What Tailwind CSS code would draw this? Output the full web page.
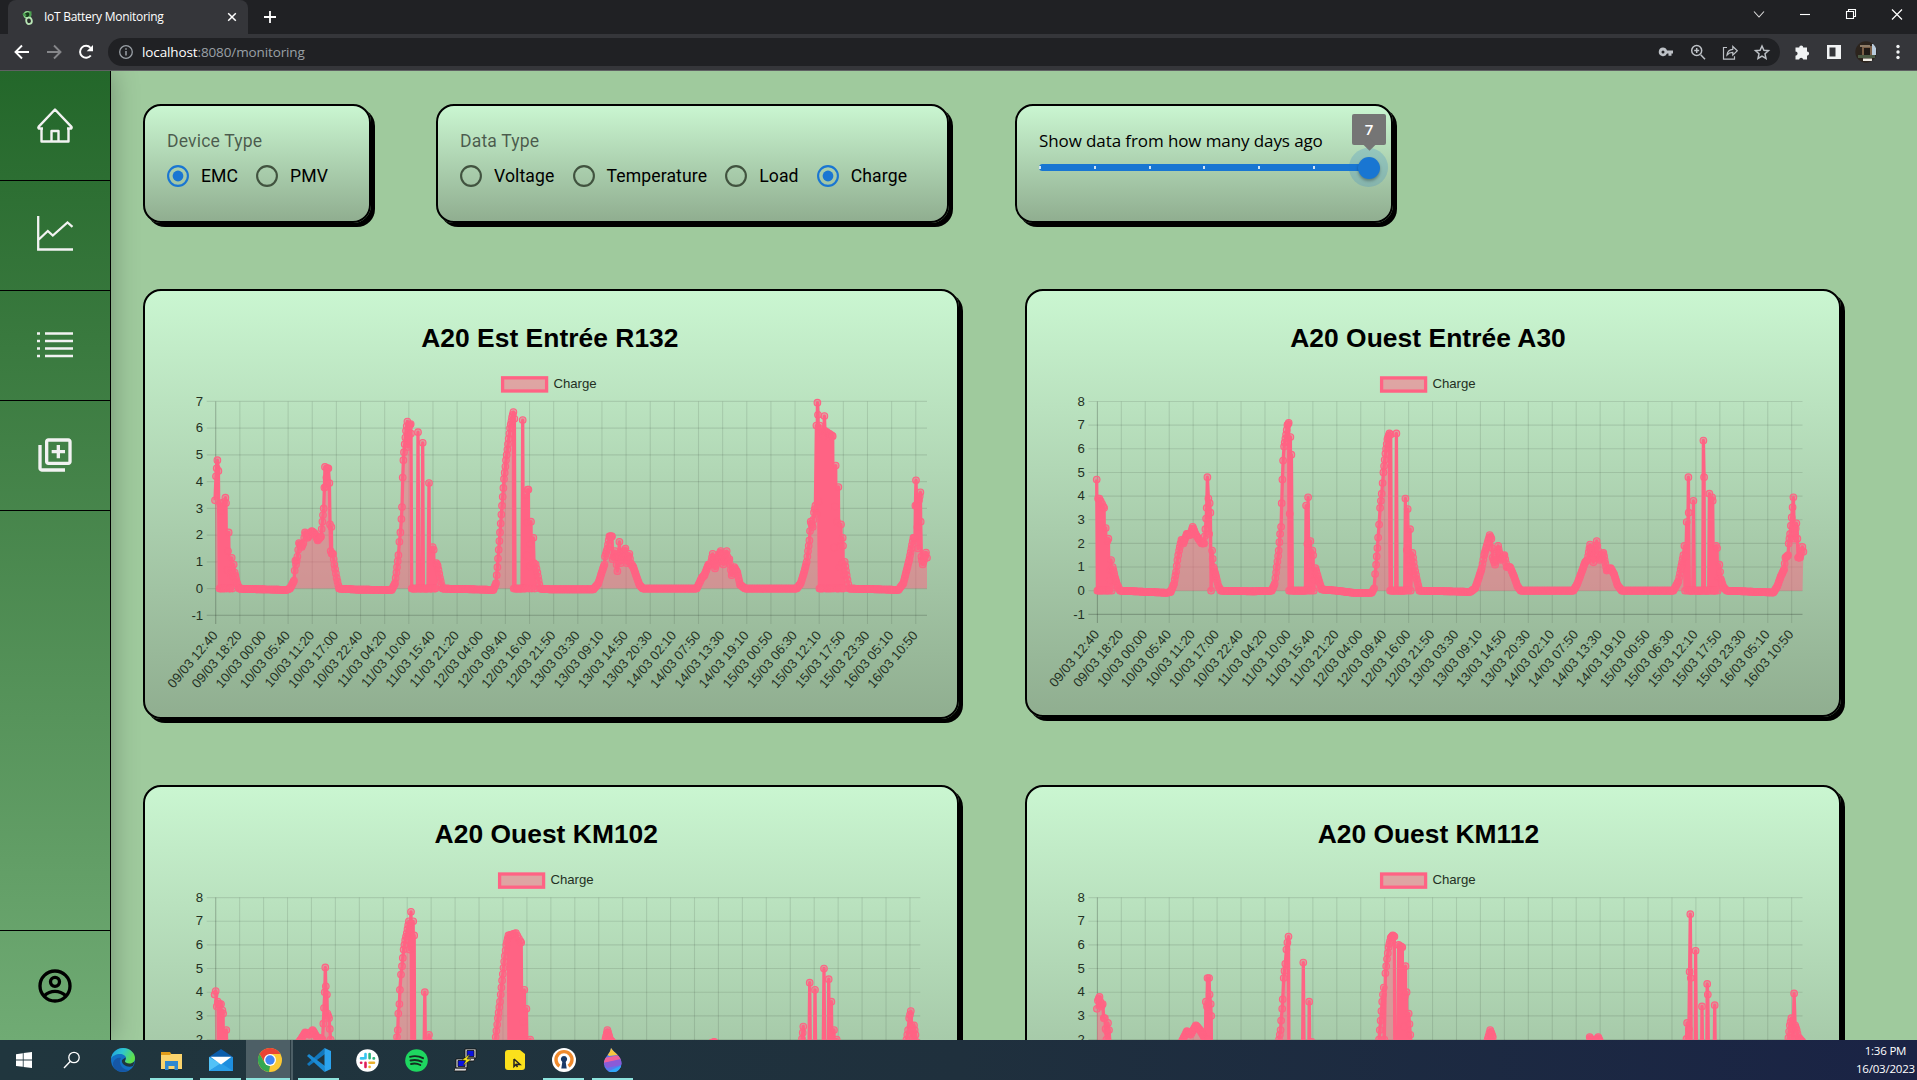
<!DOCTYPE html>
<html lang="en">
<head>
<meta charset="utf-8">
<title>IoT Battery Monitoring</title>
<script src="https://cdn.jsdelivr.net/npm/@tailwindcss/browser@4"></script>
</head>
<body class="flex h-screen w-screen flex-col overflow-hidden bg-[#9fca9d] font-['Roboto',sans-serif] text-black">

<!-- Tab strip -->
<header class="flex h-[34px] shrink-0 items-stretch justify-between bg-[#202124] text-white">
  <div class="flex items-stretch pl-2">
    <div class="flex w-[240px] items-center rounded-t-lg bg-[#35363a] pl-3 pr-[9px]">
      <svg class="mr-[8px] mt-px size-4 shrink-0" viewBox="0 0 16 16"><g transform="rotate(-12 8 8)"><ellipse cx="8" cy="4.600" rx="3.400" ry="3" fill="#183b1c" stroke="#8fd58f" stroke-width="1.300"/><path d="M4 2.500l2.500 3M12 2l-2.500 7" stroke="#4aa04f" stroke-width="2"/><ellipse cx="8.400" cy="11" rx="2.800" ry="3.200" fill="#2a2d2b" stroke="#b9e6b6" stroke-width="1.800"/></g></svg>
      <span class="grow whitespace-nowrap font-['Open_Sans',sans-serif] text-[12px] tracking-[-0.28px]">IoT Battery Monitoring</span>
      <svg class="size-[14px]" viewBox="0 0 14 14"><path d="M3.200 3.200l7.600 7.600M10.800 3.200l-7.600 7.600" stroke="#fff" stroke-width="1.500"/></svg>
    </div>
    <svg class="ml-[15px] mt-[10px] size-[14px]" viewBox="0 0 14 14"><path d="M7 1v12M1 7h12" stroke="#fff" stroke-width="1.800"/></svg>
  </div>
  <div class="flex h-[28px] items-center">
    <svg class="w-[46px]" height="14" viewBox="0 0 46 14"><path d="M18 4.500l5 5.500 5-5.500" fill="none" stroke="#ddd" stroke-width="1.100"/></svg>
    <svg class="w-[46px]" height="14" viewBox="0 0 46 14"><path d="M18 7.500h10" stroke="#fff" stroke-width="1.100"/></svg>
    <svg class="w-[46px]" height="14" viewBox="0 0 46 14"><path d="M18.500 4.500h7v7h-7zM20.500 4.500v-2h7v7h-2" fill="none" stroke="#fff" stroke-width="1.100"/></svg>
    <svg class="w-[43px]" height="14" viewBox="0 0 43 14"><path d="M18 2.500l10 10M28 2.500l-10 10" stroke="#fff" stroke-width="1.200"/></svg>
  </div>
</header>

<!-- Address bar -->
<div class="flex h-[37px] shrink-0 items-center border-b border-[#5f6063] bg-[#35363a] pl-[6px] pr-[3px]">
  <svg class="w-8" height="20" viewBox="0 0 32 20"><path d="M23 10H9.800M16 3.500L9.500 10l6.500 6.500" fill="none" stroke="#fff" stroke-width="1.900"/></svg>
  <svg class="w-8" height="20" viewBox="0 0 32 20"><path d="M9 10h13.200M16 3.500l6.500 6.500-6.500 6.500" fill="none" stroke="#86878a" stroke-width="1.900"/></svg>
  <svg class="w-8" height="20" viewBox="0 0 32 20"><path d="M20.800 13.500A6 6 0 1 1 20.500 5.800" fill="none" stroke="#fff" stroke-width="2"/><path d="M23 3v6.300h-6.300z" fill="#fff"/></svg>
  <div class="ml-[6px] flex h-7 grow items-center rounded-full bg-[#202124] pl-[10px] pr-[2px]">
    <svg class="mr-[8px] size-4" viewBox="0 0 16 16"><circle cx="8" cy="8" r="6.300" fill="none" stroke="#9aa0a6" stroke-width="1.300"/><path d="M8 7v4.500M8 4.300v1.500" stroke="#9aa0a6" stroke-width="1.500"/></svg>
    <span class="grow whitespace-nowrap font-['Open_Sans',sans-serif] text-[13.500px] tracking-[-0.12px] text-white">localhost<span class="text-[#9aa0a6]">:8080/monitoring</span></span>
    <svg class="w-8" height="20" viewBox="0 0 32 20"><path fill="#bdc1c6" fill-rule="evenodd" d="M13 5.500a4.300 4.300 0 1 0 4 6h1.500v2.300h3v-2.300h1.500v-3h-6a4.300 4.300 0 0 0-4-3zm0 2.900a1.500 1.500 0 1 1 0 3 1.500 1.500 0 0 1 0-3z"/></svg>
    <svg class="w-8" height="20" viewBox="0 0 32 20"><path d="M18.700 12.700l4.300 4.500M12.200 8.500h5M14.700 6v5" fill="none" stroke="#bdc1c6" stroke-width="1.500"/><circle cx="14.700" cy="8.500" r="5" fill="none" stroke="#bdc1c6" stroke-width="1.500"/></svg>
    <svg class="w-8" height="20" viewBox="0 0 32 20"><path d="M13 5.500H9.500v11.700h11v-3M13 13c.3-3.500 2-5.500 5.800-5.700V4.500l4.500 4.300-4.500 4.300v-2.700c-2.500 0-4.300.8-5.800 2.600z" fill="none" stroke="#bdc1c6" stroke-width="1.200"/></svg>
    <svg class="w-8" height="20" viewBox="0 0 32 20"><path d="M16 4l1.900 4.300 4.600.4-3.500 3.100 1 4.600-4-2.400-4 2.400 1-4.600-3.500-3.100 4.600-.4z" fill="none" stroke="#bdc1c6" stroke-width="1.500"/></svg>
  </div>
  <svg class="ml-[6px] w-8" height="20" viewBox="0 0 32 20"><path fill="#f1f3f4" d="M9.500 5.500h3.700a2 2 0 0 1 4 0H21v4a2 2 0 0 1 0 4.200v3.800h-3.800a2.100 2.100 0 0 0-4.100 0H9.500v-3.800a2.100 2.100 0 0 0 0-4.200z"/></svg>
  <svg class="w-8" height="20" viewBox="0 0 32 20"><path fill="#f1f3f4" fill-rule="evenodd" d="M9 3h14v14H9zM11.500 5.500v9h6v-9z"/></svg>
  <svg class="w-8" height="22" viewBox="0 0 32 22"><clipPath id="av"><circle cx="16" cy="11" r="10.700"/></clipPath><g clip-path="url(#av)"><path fill="#2c241d" d="M5 0h22v22H5z"/><path fill="#7b5f47" d="M12 5h11v9H12z"/><path fill="#211b17" d="M14 7h6v8h-6z"/><path fill="#b9cbdc" d="M22 3h4v11h-4z"/><path fill="#8f7d68" d="M10 4h10v2H10z"/><path fill="#4c5a44" d="M8 14h17v3H8z"/><path fill="#efece4" d="M13 17.500h9v2.500h-9z"/></g></svg>
  <svg class="w-8" height="20" viewBox="0 0 32 20"><g fill="#f1f3f4"><circle cx="16" cy="4.500" r="1.700"/><circle cx="16" cy="10" r="1.700"/><circle cx="16" cy="15.500" r="1.700"/></g></svg>
</div>

<!-- Page -->
<div class="flex h-[969px] shrink-0 overflow-hidden">
  <nav class="z-10 flex w-[111px] shrink-0 flex-col border-r border-black bg-linear-to-b from-[#23672a] to-[#70ab74] text-[#f2f2f2] shadow-[0_0_26px_rgba(0,0,0,0.3)]">
    <a class="flex h-[110px] items-center justify-center border-b border-black pb-[2px]"><svg class="size-[38px]" viewBox="0 0 38 38"><path d="M5.500 22.500v13h27v-13M2.500 20.800L19 3.500l16.500 17.300c.5 1-.2 2-1.500 1.700h-3M2.500 20.800c-.5 1 .2 2 1.500 1.700h3M15.500 35v-10h7v10" fill="none" stroke="currentColor" stroke-width="2.400" stroke-linejoin="round"/></svg></a>
    <a class="flex h-[110px] items-center justify-center border-b border-black pb-[3px]"><svg class="size-[38px]" viewBox="0 0 38 38"><path d="M2.200 1v33.500H37M2.800 24.500l9-8.500 5 4.500L31.500 7.500l5 4.300" fill="none" stroke="currentColor" stroke-width="2.300"/></svg></a>
    <a class="flex h-[110px] items-center justify-center border-b border-black pb-[2px]"><svg class="size-[38px]" viewBox="0 0 38 38"><path d="M1 7.500h3M9 7.500h28M1 15h3M9 15h28M1 22.500h3M9 22.500h28M1 30h3M9 30h28" fill="none" stroke="currentColor" stroke-width="2.300"/></svg></a>
    <a class="flex h-[110px] items-center justify-center border-b border-black pb-[2px]"><svg class="size-[40px]" viewBox="0 0 24 24"><path fill="currentColor" d="M4 6H2v14c0 1.100.9 2 2 2h14v-2H4V6zm16-4H8c-1.100 0-2 .9-2 2v12c0 1.100.9 2 2 2h12c1.100 0 2-.9 2-2V4c0-1.100-.9-2-2-2zm0 14H8V4h12v12zm-7-2h2v-3h3V9h-3V6h-2v3h-3v2h3v3z"/></svg></a>
    <a class="mt-auto flex h-[110px] items-center justify-center border-t border-black text-black"><svg class="size-[40px]" viewBox="0 0 24 24"><g fill="none" stroke="currentColor" stroke-width="2"><circle cx="12" cy="12" r="9"/><circle cx="12" cy="9.500" r="2.700"/><path d="M5.500 17.800C7.500 16 9.600 15.200 12 15.200s4.500.8 6.500 2.600"/></g></svg></a>
  </nav>

  <main class="flex grow flex-col gap-[66px] pl-[32px] pt-[33px]">
    <section class="flex">
      <div class="flex h-[119px] w-[228px] flex-col rounded-[18px] border-2 border-black bg-linear-to-b from-[#caf6d1] to-[#90ae90] pl-[22px] pt-[23px] text-[17.600px] shadow-[4px_4px_0.5px_#000]">
        <div class="h-[25px] leading-[25px] tracking-[0.16px] text-black/60">Device Type</div>
        <div class="mt-[9px] flex h-[26px] items-center whitespace-nowrap" data-radios="EMC*:64,PMV:40"></div>
      </div>
      <div class="ml-[65px] flex h-[119px] w-[513px] flex-col rounded-[18px] border-2 border-black bg-linear-to-b from-[#caf6d1] to-[#90ae90] pl-[22px] pt-[23px] text-[17.600px] shadow-[4px_4px_0.5px_#000]">
        <div class="h-[25px] leading-[25px] tracking-[0.16px] text-black/60">Data Type</div>
        <div class="mt-[9px] flex h-[26px] items-center whitespace-nowrap" data-radios="Voltage:87.6,Temperature:127.600,Load:66.600,Charge*:60"></div>
      </div>
      <div class="ml-[66px] flex h-[119px] w-[378px] flex-col rounded-[18px] border-2 border-black bg-linear-to-b from-[#caf6d1] to-[#90ae90] pl-[22px] pt-[22px] shadow-[4px_4px_0.5px_#000]">
        <div class="h-[26px] whitespace-nowrap font-['Open_Sans',sans-serif] text-[17px] leading-[26px] tracking-[-0.1px]">Show data from how many days ago</div>
        <div class="relative mt-[10px] h-[7px] w-[330px] rounded-full bg-[#1976d2]">
          <div class="flex h-[7px] items-center justify-between pr-[54px]">
            <i class="h-[3px] w-[2px] bg-white/80"></i><i class="h-[3px] w-[2px] bg-white/80"></i><i class="h-[3px] w-[2px] bg-white/80"></i><i class="h-[3px] w-[2px] bg-white/80"></i><i class="h-[3px] w-[2px] bg-white/80"></i><i class="h-[3px] w-[2px] bg-white/80"></i>
          </div>
          <div class="absolute -right-[19px] -top-[16px] size-[39px] rounded-full bg-[#1976d2]/20"></div>
          <div class="absolute -right-[11px] -top-[7.500px] size-[22px] rounded-full bg-[#1976d2] shadow-[0_2px_3px_rgba(0,0,0,0.3)]"></div>
          <div class="absolute -right-[17px] -top-[50px] flex h-[31px] w-[34px] items-center justify-center rounded-[2px] bg-[#757575] font-['Open_Sans',sans-serif] text-[15px] font-semibold text-white"><span class="absolute -bottom-[4px] size-[9px] rotate-45 bg-[#757575]"></span><span class="relative">7</span></div>
        </div>
      </div>
    </section>

    <section class="grid grid-cols-[816px_816px] items-start gap-x-[66px] gap-y-[66px]">
      <article data-chart="0" class="h-[430px] rounded-[18px] border-2 border-black bg-linear-to-b from-[#caf6d1] to-[#90ae90] shadow-[4px_4px_0.5px_#000]"></article>
      <article data-chart="1" class="h-[428px] rounded-[18px] border-2 border-black bg-linear-to-b from-[#caf6d1] to-[#90ae90] shadow-[4px_4px_0.5px_#000]"></article>
      <article data-chart="2" class="h-[428px] rounded-[18px] border-2 border-black bg-linear-to-b from-[#caf6d1] to-[#90ae90] shadow-[4px_4px_0.5px_#000]"></article>
      <article data-chart="3" class="h-[428px] rounded-[18px] border-2 border-black bg-linear-to-b from-[#caf6d1] to-[#90ae90] shadow-[4px_4px_0.5px_#000]"></article>
    </section>
  </main>
</div>

<!-- Taskbar -->
<footer class="z-20 flex h-10 shrink-0 items-stretch justify-between bg-linear-to-r from-[#20363e] via-[#1f303d] to-[#1a2345] text-white">
  <div class="flex">
    <div class="flex w-[48px] items-center justify-center"><svg class="size-4" viewBox="0 0 16 16"><path fill="#fff" d="M0 2.200l6.800-1v6.400H0zM7.600 1.100L16 0v7.600H7.600zM0 8.400h6.800v6.400L0 13.900zM7.600 8.400H16V16l-8.400-1.100z"/></svg></div>
    <div class="flex w-[48px] items-center justify-center"><svg class="size-[18px]" viewBox="0 0 18 18"><circle cx="11" cy="6.500" r="5.200" fill="none" stroke="#fff" stroke-width="1.300"/><path d="M7.400 10.300L1 17" stroke="#fff" stroke-width="1.400"/></svg></div>
    <div class="flex w-[54px] items-center justify-center"><svg class="size-6" viewBox="0 0 24 24"><defs><linearGradient id="e1" x1="0" y1="0" x2="1" y2=".4"><stop offset="0" stop-color="#1e9de0"/><stop offset=".5" stop-color="#2fc6cf"/><stop offset="1" stop-color="#5fe04a"/></linearGradient></defs><circle cx="12" cy="12" r="12" fill="#1370c4"/><path d="M0 11C1 4 6 0 12 0c7 0 12 5 12 10 0 4-3 6-6 6-3 0-5-1-4-3 1-1 1-2 1-3 0-2-3-4-6-4-4 0-8 2-9 5z" fill="url(#e1)"/><path d="M9 12c-1 6 4 10 9 10-8 5-17-1-16-7 1-4 5-6 8-5z" fill="#1657a6"/><path d="M14.500 9.500c.8 1.700-1.800 3.500.3 5 3 2 7 1 9-1.500L22 18c-5 2-12-1-11-6z" fill="#20363e"/></svg></div>
    <div class="flex w-[43px] items-center justify-center border-b-2 border-[#8ee3dd]"><svg class="mt-0.5 size-[23px]" viewBox="0 0 23 23"><path fill="#e19c19" d="M1 3h9l2 3h10v4H1z"/><path fill="#fbd46d" d="M1 6h9l1-1h11v15H1z"/><path fill="#2f88d0" d="M5 12h13v9h-3.500v-4h-6v4H5z"/></svg></div>
    <div class="ml-[7px] flex w-[41px] items-center justify-center border-b-2 border-[#8ee3dd]"><svg class="mt-0.5 size-6" viewBox="0 0 24 24"><path fill="#0b5dab" d="M12 1l12 8v3H0V9z"/><path fill="#1e8ede" d="M0 9h24v14H0z"/><path fill="#52c2f7" d="M0 23V9l12 7z"/><path fill="#2c9fe8" d="M0 23l12-8 12 8z"/><path fill="#fff" d="M1.500 8.800h21L12 16.500z"/></svg></div>
    <div class="ml-[5px] flex w-[44px] items-center justify-center border-b-2 border-[#8ee3dd] bg-[#4d5f66]"><svg class="ml-1 mt-0.5 size-6" viewBox="0 0 24 24"><circle cx="12" cy="12" r="12" fill="#fcc934"/><path d="M12 6h10.400A12 12 0 0 0 1.600 6L7 15z" fill="#ea4335"/><path d="M1.600 6l5.200 9L12 18l-1 6A12 12 0 0 1 1.600 6z" fill="#34a853"/><circle cx="12" cy="12" r="6" fill="#fff"/><circle cx="12" cy="12" r="4.700" fill="#4285f4"/></svg></div>
    <div class="w-[3px] border-l border-[#2a3c43] bg-[#4d5f66]"></div>
    <div class="ml-[5px] flex w-[41px] items-center justify-center border-b-2 border-[#8ee3dd]"><svg class="mt-0.5 size-6" viewBox="0 0 24 24"><path fill="#1278bd" d="M17.500 0L0 16l2 2L18 6z"/><path fill="#1b8bd4" d="M17.500 24L0 8l2-2 16 12z"/><path fill="#2ba3ee" d="M17.500 0L24 3v18l-6.500 3z"/></svg></div>
    <div class="ml-[5px] flex w-[47px] items-center justify-center"><svg class="size-[23px]" viewBox="0 0 23 23"><circle cx="11.500" cy="11.500" r="11.300" fill="#fff"/><g stroke-width="2.600" stroke-linecap="round"><path d="M9.500 5v4.300M5 9.400h2.600" stroke="#36c5f0"/><path d="M13.600 5v4.300M18 9.400h-.4" stroke="#2eb67d"/><path d="M13.500 13.700H18M13.600 17.700v.3" stroke="#ecb22e"/><path d="M5 13.700h.3M9.500 13.700V18" stroke="#e01e5a"/></g></svg></div>
    <div class="flex w-[51px] items-center justify-center"><svg class="size-[23px]" viewBox="0 0 23 23"><circle cx="11.500" cy="11.500" r="11.300" fill="#1ed760"/><path d="M5 7.800c4.500-1.200 9-.8 13 1.400M5.500 11.500c4-1 7.800-.6 11.200 1.200M6 15c3.300-.8 6.500-.5 9.300 1" fill="none" stroke="#152b20" stroke-width="1.900" stroke-linecap="round"/></svg></div>
    <div class="flex w-[47px] items-center justify-center"><svg class="size-6" viewBox="0 0 24 24"><g stroke="#111" stroke-width=".8"><path fill="#d9d9d9" d="M11 1h11v9H11zM10 10h11l-1 3H9zM2 11h11v9H2zM1 20h12l-1 3H0z"/><path fill="#0a12e0" d="M13 2.500h7v6h-7zM4 12.500h7v6H4z"/><path fill="#f8e71c" d="M16 6l-8 6 4 .5-3 5 8-6-4-.5z" stroke-width=".4"/></g></svg></div>
    <div class="flex w-[50px] items-center justify-center"><svg class="ml-px size-[22px]" viewBox="0 0 22 22"><path fill="#fbe01c" d="M4 1h12l5 4v13q0 3-3 3H4q-3 0-3-3V4q0-3 3-3z"/><path d="M10 10v7.500l2-2 1.500 2.500M10 10l6 5.500h-3.500" fill="none" stroke="#222" stroke-width="1.500"/></svg></div>
    <div class="ml-[4px] flex w-[41px] items-center justify-center border-b-2 border-[#8ee3dd]"><svg class="mt-0.5 size-6" viewBox="0 0 24 24"><circle cx="12" cy="12" r="12" fill="#fff"/><path d="M7.500 18.200A8 8 0 1 1 16.500 18.200" fill="none" stroke="#f08a2c" stroke-width="3.400"/><path fill="#1a3967" d="M12 8a3.200 3.200 0 0 1 1.700 5.900l1 6.600H9.300l1-6.600A3.200 3.200 0 0 1 12 8z"/></svg></div>
    <div class="ml-[8px] flex w-[41px] items-center justify-center border-b-2 border-[#8ee3dd]"><svg class="mt-0.5 size-6" viewBox="0 0 24 24"><defs><clipPath id="drop"><path d="M10 0c3 5 10.500 8 10.500 15.500a8.800 8.800 0 0 1-17.600 0C2.900 9 9.500 6 10 0z"/></clipPath></defs><g clip-path="url(#drop)"><path fill="#5a78ee" d="M0 0h24v24H0z"/><path fill="#f8c63e" d="M0 0h24v6L8 8z"/><path fill="#f0609a" d="M24 6v5L3 15v-5z"/><path fill="#8a5bd8" d="M24 10v6L6 20l-4-5z"/><path fill="#2fa8f7" d="M24 16v8H6z"/></g></svg></div>
  </div>
  <div class="flex flex-col items-center pr-[2px] pt-[2px] font-['Open_Sans',sans-serif] text-[11.500px] leading-[18px] tracking-[-0.2px]">
    <span>1:36 PM</span><span>16/03/2023</span>
  </div>
</footer>

<script>
// Radio groups: "Label[*]:width", the star marks the selected option
document.querySelectorAll('[data-radios]').forEach(el => {
  el.innerHTML = el.dataset.radios.split(',').map(o => {
    const [name, w] = o.split(':'), on = name.endsWith('*');
    const c = on ? '#1976d2' : '#41533f';
    return `<svg class="size-[22px] shrink-0" viewBox="0 0 22 22"><circle cx="11" cy="11" r="9.900" fill="none" stroke="${c}" stroke-width="2.100"/>${on ? `<circle cx="11" cy="11" r="5.400" fill="${c}"/>` : ''}</svg><span class="pl-[12px] shrink-0 tracking-[0.1px]" style="width:${+w + 3}px">${name.replace('*', '')}</span>`;
  }).join('');
});

const times = '09/03 12:40,09/03 18:20,10/03 00:00,10/03 05:40,10/03 11:20,10/03 17:00,10/03 22:40,11/03 04:20,11/03 10:00,11/03 15:40,11/03 21:20,12/03 04:00,12/03 09:40,12/03 16:00,12/03 21:50,13/03 03:30,13/03 09:10,13/03 14:50,13/03 20:30,14/03 02:10,14/03 07:50,14/03 13:30,14/03 19:10,15/03 00:50,15/03 06:30,15/03 12:10,15/03 17:50,15/03 23:30,16/03 05:10,16/03 10:50'.split(',');

// data: "x,value" pairs; a pair prefixed with B zigzags down to zero on the way to it
const charts = [
 {title:'A20 Est Entrée R132', vx:145, vy:291, t0:421.2, t1:678.5, leg:502.6, x0:215.7, x1:927, step:24.14, top:401.4, max:7, unit:26.74, u0:227, k:3,
  data:'225,3.3 228,4.2 232,4.8 235,4.4 238,0 240,3.2 242,0 243,2.9 B256,3.4 258,3.2 260,0 266,2.1 268,0 270,0 275,1.15 277,0 281,.9 284,.6 290,.25 297,0 330,-.02 440,-.05 450,0 462,.3 466,1.05 468,.9 472,1.2 477,1.7 485,1.55 490,1.7 495,2.1 503,1.9 515,2.15 525,2.05 533,1.8 543,1.95 547,2.5 551,3 555,4.55 557,3.8 561,4.5 565,4.5 568,3.95 570,2.4 572,1.4 574,2.3 575,1.3 579,1.3 583,.9 590,.4 597,0 650,-.04 755,-.05 765,.2 771,.8 775,1.25 778,1.75 781,2.1 784,2.6 786,3.05 788,4.15 790,4.8 794,5.4 798,5.9 802,6.25 804,5.3 808,6.1 812,6.15 813,5.8 815,0 832,0 834,5.85 837,0 846,0 848,5.45 850,0 864,0 867,3.95 869,0 876,0 878,1.55 881,1.45 883,0 886,0 889,.95 893,.85 900,.4 907,0 1060,-.05 1068,.2 1072,.8 1076,1.45 1080,2.1 1086,3.1 1092,4.1 1098,4.8 1104,5.4 1110,6 1116,6.4 1120,6.6 1121,0 1123,6.35 1125,0 1146,0 1148,6.3 1150,0 1153,0 1155,3.5 1157,0 1163,3.7 1165,3.7 1166,0 1173,2.5 1175,0 1180,1.9 1184,0 1187,.9 1192,.6 1200,0 1230,-.03 1360,-.03 1375,.2 1385,.6 1393,.9 1395,1.2 1402,1.5 1408,1.95 1416,1.95 1418,1.1 1425,1.4 1432,.65 1435,1.2 1438,1.75 1442,.95 1449,1.3 1456,1.5 1460,.95 1468,1.3 1472,.95 1480,.8 1488,.5 1498,.15 1508,0 1670,0 1685,.4 1693,.5 1705,.9 1712,.9 1718,1.3 1725,.75 1735,1.2 1742,1.4 1750,.9 1760,1.4 1764,1 1768,1.1 1775,.5 1783,.8 1792,.6 1800,.15 1815,0 1970,0 1982,.2 1992,.6 2000,1 2004,1.4 2008,1.8 2012,2.5 2018,2.3 2022,2.85 2026,3.1 2029,6.1 2031,2.8 2032,6.95 2034,6.5 2038,0 2039,6.1 B2051,5.7 2053,6.45 B2055,5.9 B2078,5.7 2080,0 2087,4.6 2089,0 2091,2.5 2093,0 2095,3.8 2097,0 2103,2.4 2104,0 2108,1.9 2109,1.6 2110,0 2114,1 2120,.5 2127,0 2275,-.05 2290,.2 2298,.6 2308,1.1 2314,1.5 2320,1.9 2325,1.9 2326,3.1 2328,4.05 2330,3.1 2334,1.5 2337,3.3 2341,3.6 2342,2.5 2344,1.2 2348,.9 2358,1.35 2361,1.15'},
 {title:'A20 Ouest Entrée A30', vx:1027, vy:291, t0:1290.2, t1:1565.8, leg:1381.6, x0:1097.4, x1:1802.5, step:23.94, top:401.5, max:8, unit:23.65, u0:232, k:3,
  data:'230,4.7 232,0 234,3.9 B238,3.9 B252,3.5 254,0 257,2.65 259,0 262,2.1 263,0 265,2.2 267,0 273,1.3 275,0 278,1 284,.6 290,.3 300,0 440,-.09 452,-.05 462,.3 468,.8 472,1.3 477,1.7 484,2.15 490,2 500,2.4 510,2.35 518,2.7 526,2.4 535,2.2 545,2 552,2 556,2.6 560,3.5 562,4.8 565,3.9 567,2.4 569,3.7 571,3.3 573,0 576,1.7 580,1 588,.6 595,.2 602,0 700,-.03 755,0 764,.3 770,1 776,1.7 780,2.4 783,2.7 785,3.7 787,4.7 789,5.5 792,6.1 798,6.6 802,7 806,7.1 807,0 811,6.5 812,0 814,5.75 817,0 856,0 858,3.6 860,0 864,3.95 867,0 871,2.1 873,0 877,1.7 879,1.5 881,0 886,.95 895,.5 905,.05 950,0 1000,-.09 1055,-.09 1062,.1 1065,.7 1068,1.1 1072,1.8 1074,2.25 1077,2.8 1080,3.5 1085,4.1 1090,5 1096,5.8 1102,6.4 1108,6.65 1110,0 1112,6.6 1114,0 1127,0 1129,6.65 1131,0 1154,0 1156,3.9 1158,0 1163,3.45 1165,0 1170,2.6 1172,0 1177,1.6 1183,1 1190,.5 1198,0 1350,-.05 1365,.1 1375,.5 1385,.95 1392,1.5 1400,1.9 1409,2.35 1414,2.2 1418,1.4 1425,1.1 1434,1.9 1442,1.3 1453,1.5 1460,1 1470,1 1482,.6 1492,.2 1502,0 1660,0 1672,.3 1685,.8 1695,1.2 1702,1.3 1710,1.95 1720,1.2 1730,2.1 1738,1.3 1750,1.6 1760,.85 1772,.95 1782,.7 1792,.25 1805,0 1960,0 1975,.4 1982,.9 1990,1.5 1993,1.9 1995,0 2000,2.9 2002,0 2005,4.8 2006,3.3 2008,0 2018,0 2020,3.8 2023,0 2048,0 2050,6.35 2052,4.8 2053,0 2066,0 2068,4.1 2071,0 2074,0 2076,3.95 2078,3.8 2080,0 2086,0 2088,1.9 2091,1.8 2093,0 2098,1.1 2102,.5 2110,.15 2120,0 2260,-.08 2272,.2 2282,.6 2292,.9 2296,1.4 2304,1.5 2306,2 2310,2.4 2315,3.1 2320,3.95 2323,2.2 2329,2.85 2332,2.2 2334,1.4 2340,1.4 2347,1.85 2350,1.65'},
 {title:'A20 Ouest KM102', vx:145, vy:787, t0:434.6, t1:658, leg:499.6, x0:215.7, x1:920.3, step:23.94, top:897.6, max:8, unit:23.65, u0:143, k:1.889,
  data:'141,3.9 143,4.05 145,3.4 147,3.6 148,3.5 B153,3.5 B157,3.1 158,0 163,2.4 166,0 290,0 297,1.8 304,2 312,2.3 320,2.2 326,2.4 334,2.1 345,2 349,4 350,5.05 351,4.25 353,3.9 354,3.1 357,2.9 360,2 366,0 478,0 484,1.8 487,2.4 488,3.1 490,3.5 491,4.1 493,4.75 495,5.1 498,5.8 501,6.2 504,6.5 508,7 509,5.8 512,7.4 514,0 516,7 517,0 518,6.4 519,0 536,0 538,4 540,0 543,0 546,2.2 549,1.6 556,0 665,0 672,2.1 676,2.9 680,3.6 684,4.5 688,5.3 692,6 696,6.4 B710,6.5 B720,6.1 722,0 726,4.1 728,0 730,3.3 732,0 737,2 742,1 750,0 865,0 878,1.9 883,2.4 888,2 896,1.8 910,0 1060,0 1075,1.8 1085,1.9 1095,1.6 1110,0 1240,0 1248,1.5 1253,2.55 1255,0 1263,0 1265,4.4 1267,0 1274,0 1275,4.1 1277,0 1290,0 1292,5 1294,0 1300,0 1301,4.55 1303,0 1306,3.6 1308,0 1311,2.4 1313,0 1316,2 1325,0 1435,0 1448,2 1451,2.4 1453,2.9 1456,3.2 1459,2 1462,2.6 1465,2.2 1468,1.6 1474,1.5'},
 {title:'A20 Ouest KM112', vx:1027, vy:787, t0:1317.7, t1:1539.1, leg:1381.6, x0:1097.4, x1:1802.5, step:23.94, top:897.6, max:8, unit:23.65, u0:146, k:1.889,
  data:'145,3.3 147,3.65 150,3.8 153,3.4 156,3.5 158,2.9 160,2.9 163,2 166,2.7 168,2.4 170,1.8 176,0 295,0 305,1.9 315,2.35 322,2.2 332,2.6 340,2.4 350,2 351,3.6 353,3.4 354,4.6 355,2 357,4.6 358,3.9 360,3.5 361,3 362,0 480,0 489,2 492,2.4 493,2.8 495,3.3 496,3.7 498,4.6 501,5.2 503,5.8 505,6.1 507,6.35 508,0 533,0 535,5.25 537,0 545,0 546,3.6 548,0 551,1.9 556,0 672,0 678,2 681,2.8 684,3.6 687,4.2 688,2 690,4.8 693,5.4 696,5.9 700,6.3 704,6.4 707,6.35 708,0 713,0 715,6 B722,5.9 723,0 728,5.1 729,0 730,4 731,0 734,3.1 737,2.2 745,0 870,0 882,1.9 888,2.4 893,2.1 905,0 1065,0 1076,2.1 1084,1.8 1092,2.1 1100,1.7 1110,0 1255,0 1260,2.7 1262,0 1266,7.3 1267,4.6 1268,0 1275,0 1276,5.75 1278,0 1287,0 1288,3.4 1290,0 1297,0 1298,4.35 1299,3.9 1301,0 1311,0 1312,3.45 1314,0 1440,0 1450,1.8 1454,2.6 1457,2.9 1460,2 1462,3.95 1464,2.6 1467,2.4 1470,2.1 1478,1.9'}
];
const SAMPLE = 0.71;

function build(c) {
  const Y = v => c.top + (c.max - v) * c.unit;
  const bottom = Y(-1), tick = bottom + 8.7;
  let s = '';
  for (let v = c.max; v >= -1; v--) {
    s += `<path d="M${c.x0 - 9} ${Y(v)}H${c.x1}" stroke="#000" stroke-opacity="${v < 0 ? .2 : .1}" stroke-width="1.100"/>`;
    s += `<text x="${c.x0 - 12.5}" y="${Y(v) + 4.2}" text-anchor="end">${v}</text>`;
  }
  times.forEach((t, i) => {
    const x = c.x0 + i * c.step;
    s += `<path d="M${x} ${c.top}V${tick}" stroke="#000" stroke-opacity="${i ? .1 : .22}" stroke-width="1.100"/>`;
    s += `<text transform="translate(${x - .8} ${tick + 8.7}) rotate(-50)" text-anchor="end" y="4.500">${t}</text>`;
  });
  const pts = [];
  c.data.split(' ').forEach(p => {
    const zig = p[0] === 'B';
    const [u, v] = p.replace('B', '').split(',').map(Number);
    const x = c.x0 + (u - c.u0) / c.k;
    if (pts.length) {
      const last = pts[pts.length - 1], n = Math.round((x - last[0]) / SAMPLE);
      for (let j = 1; j < n; j++) {
        const f = j / n, val = last[1] + (v - last[1]) * f;
        pts.push([last[0] + (x - last[0]) * f, zig && j % 2 ? 0 : val]);
      }
    }
    pts.push([x, v]);
  });
  const line = pts.map(p => p[0].toFixed(1) + ' ' + Y(p[1]).toFixed(1)).join('L');
  s += `<path d="M${c.x0} ${Y(0)}L${line}L${c.x1} ${Y(0)}Z" fill="#ff6384" fill-opacity=".5"/>`;
  s += `<path d="M${line}" fill="none" stroke="#ff6384" stroke-width="3.300" stroke-linejoin="round"/>`;
  s += '<g fill="#ff6384" fill-opacity=".5" stroke="#ff6384" stroke-width="1.100">' + pts.map(p => `<circle cx="${p[0].toFixed(1)}" cy="${Y(p[1]).toFixed(1)}" r="3.300"/>`).join('') + '</g>';
  const ly = c.top - 23.6;
  s += `<rect x="${c.leg}" y="${ly}" width="44" height="13.200" fill="#ff6384" fill-opacity=".5" stroke="#ff6384" stroke-width="3.300"/>`;
  s += `<text x="${c.leg + 50.8}" y="${ly + 10}">Charge</text>`;
  s += `<text x="${c.t0}" y="${c.top - 54.9}" textLength="${c.t1 - c.t0}" class="fill-black text-[26.400px] font-bold">${c.title}</text>`;
  return `<svg class="block h-[423px] w-[811px] fill-[#233023] font-['Liberation_Sans',Arial,sans-serif] text-[13.200px]" viewBox="${c.vx} ${c.vy} 811 423">${s}</svg>`;
}
document.querySelectorAll('[data-chart]').forEach(el => { el.innerHTML = build(charts[+el.dataset.chart]); });
</script>
</body>
</html>
